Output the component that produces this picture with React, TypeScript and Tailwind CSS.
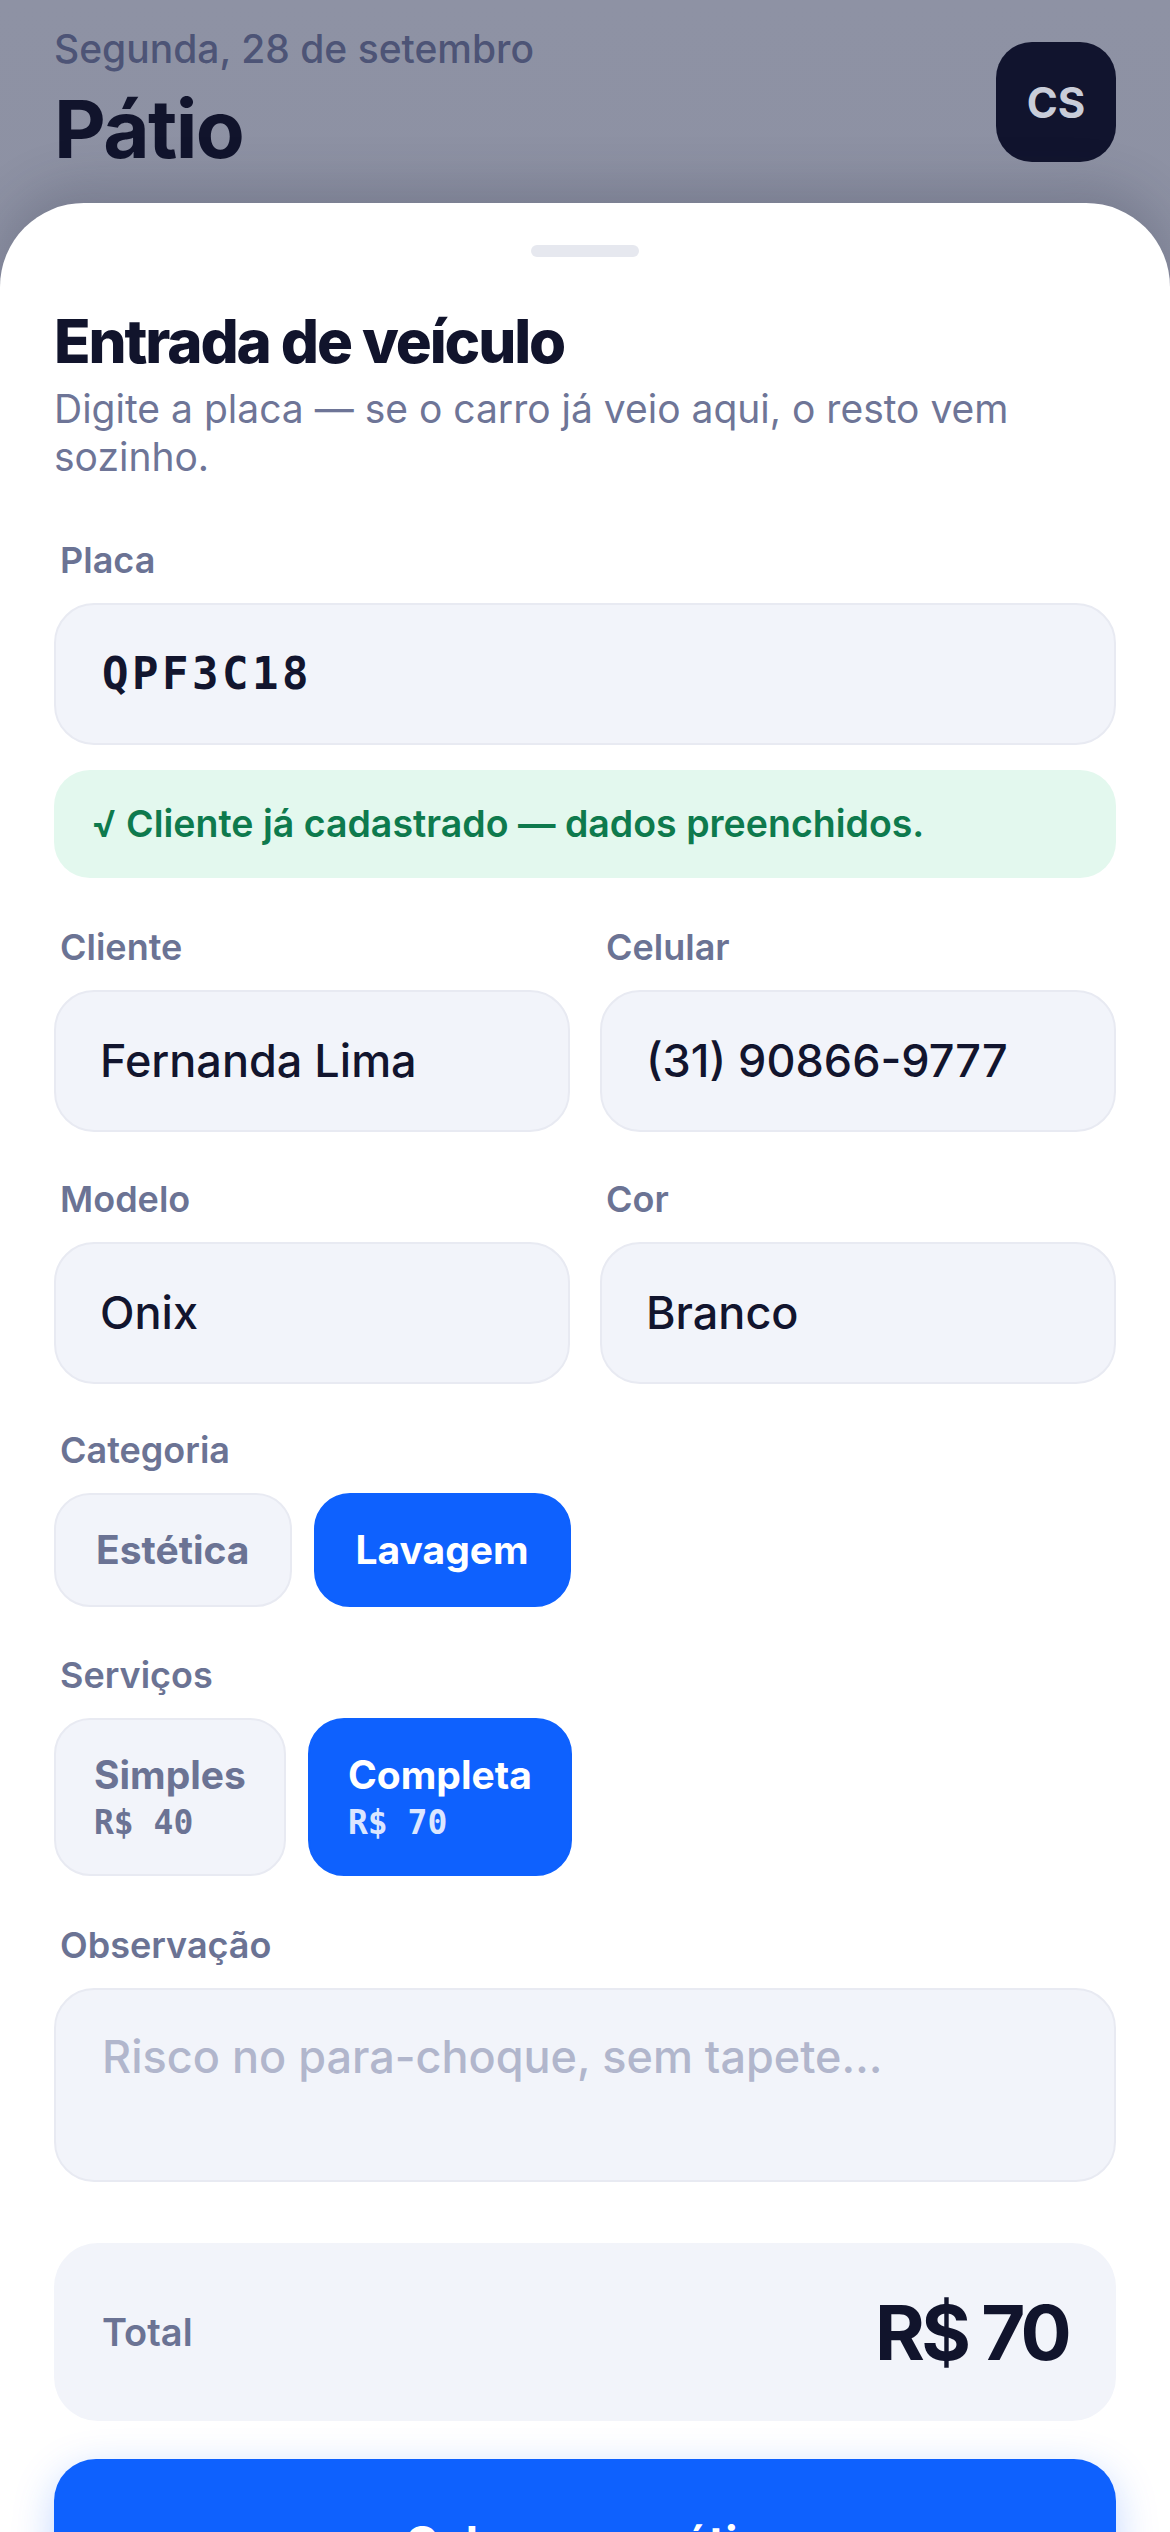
import { FC, ReactNode } from "react";

const font = "font-['Inter','Noto_Sans',sans-serif]";
const mono = "font-['DejaVu_Sans_Mono','Liberation_Mono',monospace]";

const Label: FC<{ children: ReactNode }> = ({ children }) => (
  <div className="pl-[6px] text-[36px] leading-[46px] font-semibold text-[#6b7394]">
    {children}
  </div>
);

const Field: FC<{ label: string; value: string; className?: string }> = ({
  label,
  value,
  className,
}) => (
  <div className={`flex flex-col gap-[20px] ${className ?? ""}`}>
    <Label>{label}</Label>
    <div className="flex h-[142px] items-center rounded-[40px] border-2 border-[#e8eaf2] bg-[#f2f4fa] px-[44px] text-[45px] font-medium text-[#12152e]">
      {value}
    </div>
  </div>
);

const Chip: FC<{ text: string; active?: boolean }> = ({ text, active }) => (
  <div
    className={
      active
        ? "flex h-[114px] items-center rounded-[36px] border-2 border-[#0e61fe] bg-[#0e61fe] px-[40px] text-[39px] font-bold text-white"
        : "flex h-[114px] items-center rounded-[36px] border-2 border-[#e8eaf2] bg-[#f2f4fa] px-[40px] text-[39px] font-bold text-[#6b7394]"
    }
  >
    {text}
  </div>
);

const ServiceChip: FC<{ name: string; price: string; active?: boolean }> = ({
  name,
  price,
  active,
}) => (
  <div
    className={
      active
        ? "flex h-[158px] flex-col justify-center gap-[3px] rounded-[36px] border-2 border-[#0e61fe] bg-[#0e61fe] px-[38px] text-white"
        : "flex h-[158px] flex-col justify-center gap-[3px] rounded-[36px] border-2 border-[#e8eaf2] bg-[#f2f4fa] px-[38px] text-[#6b7394]"
    }
  >
    <span className="text-[39px] leading-[49px] font-bold">{name}</span>
    <span
      className={`${mono} text-[33px] leading-[42px] font-bold ${active ? "text-[#dbe6ff]" : ""}`}
    >
      {price}
    </span>
  </div>
);

export default function App() {
  return (
    <div
      className={`${font} flex h-[2532px] w-[1170px] flex-col overflow-hidden bg-linear-to-b from-[#8e92a4] to-[#858a9d]`}
    >
      <header className="flex h-[203px] shrink-0 items-start justify-between px-[54px] pt-[25px]">
        <div className="flex flex-col gap-[12px]">
          <span className="text-[39px] leading-[48px] font-medium text-[#4d5476]">
            Segunda, 28 de setembro
          </span>
          <h1 className="text-[80px] leading-[88px] font-bold tracking-[-0.02em] text-[#11142c]">
            Pátio
          </h1>
        </div>
        <div className="mt-[17px] flex h-[120px] w-[120px] items-center justify-center rounded-[36px] bg-[#11142e] text-[42px] font-bold text-[#c9cdd9]">
          CS
        </div>
      </header>

      <main className="flex flex-1 flex-col rounded-t-[84px] bg-white px-[54px] pt-[42px] shadow-[0_-16px_50px_rgba(40,44,70,0.22)]">
        <div className="mx-auto h-[12px] w-[108px] rounded-full bg-[#e6e8ef]" />

        <h2 className="mt-[48px] text-[60px] leading-[72px] font-extrabold tracking-[-0.035em] text-[#11142c]">
          Entrada de veículo
        </h2>
        <p className="mt-[8px] max-w-[1000px] text-[39px] leading-[48px] text-[#6e7597]">
          Digite a placa — se o carro já veio aqui, o resto vem sozinho.
        </p>

        <div className="mt-[56px] flex flex-col gap-[20px]">
          <Label>Placa</Label>
          <div
            className={`${mono} flex h-[142px] items-center rounded-[40px] border-2 border-[#e8eaf2] bg-[#f2f4fa] px-[46px] text-[44px] font-bold tracking-[0.08em] text-[#12152e]`}
          >
            QPF3C18
          </div>
        </div>

        <div className="mt-[25px] flex h-[108px] items-center rounded-[36px] bg-[#e3f8ee] px-[38px] text-[37.5px] font-semibold text-[#0e7a4d]">
          √ Cliente já cadastrado — dados preenchidos.
        </div>

        <div className="mt-[46px] grid grid-cols-2 gap-x-[30px]">
          <Field label="Cliente" value="Fernanda Lima" />
          <Field label="Celular" value="(31) 90866-9777" />
        </div>

        <div className="mt-[44px] grid grid-cols-2 gap-x-[30px]">
          <Field label="Modelo" value="Onix" />
          <Field label="Cor" value="Branco" />
        </div>

        <div className="mt-[43px] flex flex-col gap-[20px]">
          <Label>Categoria</Label>
          <div className="flex gap-[22px]">
            <Chip text="Estética" />
            <Chip text="Lavagem" active />
          </div>
        </div>

        <div className="mt-[45px] flex flex-col gap-[20px]">
          <Label>Serviços</Label>
          <div className="flex gap-[22px]">
            <ServiceChip name="Simples" price="R$ 40" />
            <ServiceChip name="Completa" price="R$ 70" active />
          </div>
        </div>

        <div className="mt-[46px] flex flex-col gap-[20px]">
          <Label>Observação</Label>
          <div className="h-[194px] rounded-[40px] border-2 border-[#e8eaf2] bg-[#f2f4fa] px-[46px] pt-[38px] text-[45px] leading-[58px] font-medium text-[#b1b6cc]">
            Risco no para-choque, sem tapete…
          </div>
        </div>

        <div className="mt-[61px] flex h-[178px] items-center justify-between rounded-[44px] bg-[#f2f4fa] px-[48px]">
          <span className="text-[38px] font-semibold text-[#6b7394]">Total</span>
          <span className="text-[76px] font-bold tracking-[-0.05em] text-[#11142c]">
            R$ 70
          </span>
        </div>

        <button className="mt-[38px] flex h-[168px] shrink-0 items-center justify-center rounded-[42px] bg-[#0e61fe] text-[45px] font-bold text-white shadow-[0_12px_40px_rgba(14,97,254,0.25)]">
          Colocar no pátio
        </button>
      </main>
    </div>
  );
}
